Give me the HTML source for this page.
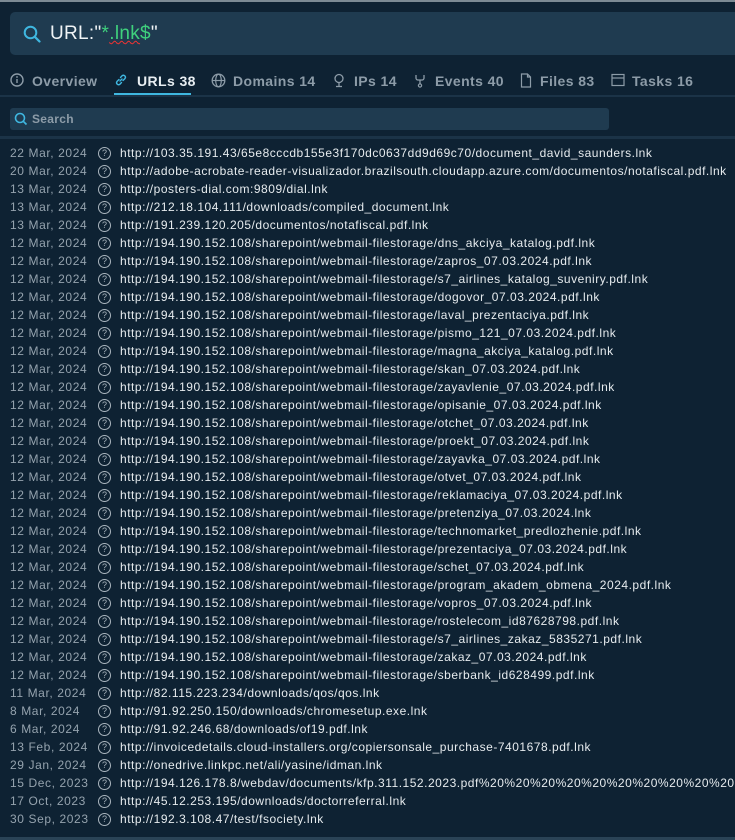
<!DOCTYPE html>
<html><head><meta charset="utf-8"><style>
body{margin:0;width:735px;height:840px;background:#0e2233;font-family:"Liberation Sans",sans-serif;overflow:hidden;position:relative}
.top{position:absolute;left:0;top:0;width:735px;height:2px;background:#7c8a94}
.sb{position:absolute;left:10px;top:12px;width:730px;height:43px;background:#1f3b50;border-radius:5px}
.sb .t{position:absolute;left:40px;top:11px;font-size:19px;color:#f0f4f6;letter-spacing:0.3px}
.g{color:#3fd17d}
.tabs{position:absolute;top:71px;left:0;height:24px;width:735px;font-size:14px;color:#8d9ca8;font-weight:bold}
.tab{position:absolute;top:2px;white-space:nowrap}
.tl{position:absolute;top:2px;white-space:nowrap;letter-spacing:0.4px}
.line{position:absolute;left:0;width:735px;height:2px;background:#1b3347}
.srch{position:absolute;left:10px;top:108px;width:599px;height:22px;background:#1f3b50;border-radius:3px}
.srch span{position:absolute;left:22px;top:4px;font-size:12px;color:#8d9ca8;font-weight:bold;letter-spacing:0.3px}
.row{position:absolute;left:0;height:18px;font-size:12px;white-space:nowrap}
.d{position:absolute;left:10px;top:0;color:#95a3ae;letter-spacing:0.6px}
.q{position:absolute;left:98px;top:1px;width:11px;height:11px;border:1px solid #aab5be;border-radius:50%;font-size:9px;color:#aab5be;text-align:center;line-height:11px}
.u{position:absolute;left:120px;top:0;color:#e6ebee;letter-spacing:0.52px}
.bot{position:absolute;left:0;top:837px;width:735px;height:3px;background:#2a4356}
</style></head><body>
<div class="top"></div>
<div class="sb">
<svg style="position:absolute;left:13px;top:13px" width="18" height="18" viewBox="0 0 18 18"><circle cx="7.5" cy="7.5" r="5.8" fill="none" stroke="#3fb7e0" stroke-width="2"/><line x1="11.8" y1="11.8" x2="16.5" y2="16.5" stroke="#3fb7e0" stroke-width="2.2" stroke-linecap="round"/></svg>
<div class="t">URL:"<span class="g">*<span style="text-decoration:underline wavy #e33;text-decoration-thickness:1px">.lnk</span>$</span>"</div>
</div>
<div class="tabs">
<svg class="tab" style="left:10px" width="14" height="14"><circle cx="7" cy="7" r="6" fill="none" stroke="#8d9ca8" stroke-width="1.4"/><line x1="7" y1="6" x2="7" y2="10" stroke="#8d9ca8" stroke-width="1.4"/><circle cx="7" cy="4" r="0.9" fill="#8d9ca8"/></svg><span class="tl" style="left:32px">Overview</span>
<svg class="tab" style="left:114px" width="14" height="14"><path d="M6 8 L8 6 M5 6.5 L3 8.5 a2 2 0 0 0 2.8 2.8 L7.5 9.5 M9 7.5 L11 5.5 a2 2 0 0 0 -2.8 -2.8 L6.5 4.5" fill="none" stroke="#3fb7e0" stroke-width="1.4" stroke-linecap="round"/></svg><span class="tl" style="left:137px;color:#e8eef2">URLs 38</span>
<svg class="tab" style="left:211px" width="15" height="15"><circle cx="7.5" cy="7.5" r="6.3" fill="none" stroke="#8d9ca8" stroke-width="1.3"/><ellipse cx="7.5" cy="7.5" rx="2.8" ry="6.3" fill="none" stroke="#8d9ca8" stroke-width="1.2"/><line x1="1.2" y1="7.5" x2="13.8" y2="7.5" stroke="#8d9ca8" stroke-width="1.2"/></svg><span class="tl" style="left:233px">Domains 14</span>
<svg class="tab" style="left:333px" width="12" height="15"><circle cx="6" cy="5.5" r="4" fill="none" stroke="#8d9ca8" stroke-width="1.3"/><line x1="6" y1="9.5" x2="6" y2="14" stroke="#8d9ca8" stroke-width="1.3"/><line x1="3" y1="13.5" x2="9" y2="13.5" stroke="#8d9ca8" stroke-width="1.3"/></svg><span class="tl" style="left:354px">IPs 14</span>
<svg class="tab" style="left:414px" width="12" height="15"><path d="M2 2 V5 a2 2 0 0 0 2 2 H8 a2 2 0 0 0 2 -2 V2 M6 7 V11" fill="none" stroke="#8d9ca8" stroke-width="1.3"/><circle cx="6" cy="12.5" r="1.6" fill="none" stroke="#8d9ca8" stroke-width="1.2"/></svg><span class="tl" style="left:435px">Events 40</span>
<svg class="tab" style="left:520px" width="12" height="15"><path d="M1.5 1 H7.5 L10.5 4 V14 H1.5 Z M7.5 1 V4 H10.5" fill="none" stroke="#8d9ca8" stroke-width="1.2"/></svg><span class="tl" style="left:540px">Files 83</span>
<svg class="tab" style="left:611px" width="14" height="14"><rect x="1" y="1.5" width="12" height="11" fill="none" stroke="#8d9ca8" stroke-width="1.2"/><line x1="1" y1="5" x2="13" y2="5" stroke="#8d9ca8" stroke-width="1.2"/></svg><span class="tl" style="left:632px">Tasks 16</span>
</div>
<div style="position:absolute;left:114px;top:93px;width:77px;height:2px;background:#3fb7e0"></div>
<div class="line" style="top:95px"></div>
<div class="srch"><svg style="position:absolute;left:4px;top:4px" width="14" height="14"><circle cx="6" cy="6" r="4.5" fill="none" stroke="#3fb7e0" stroke-width="1.6"/><line x1="9.3" y1="9.3" x2="12.5" y2="12.5" stroke="#3fb7e0" stroke-width="1.7"/></svg><span>Search</span></div>
<div class="line" style="top:136px;height:3px"></div>
<div class="row" style="top:146px"><span class="d">22 Mar, 2024</span><span class="q">?</span><span class="u">http://103.35.191.43/65e8cccdb155e3f170dc0637dd9d69c70/document_david_saunders.lnk</span></div>
<div class="row" style="top:164px"><span class="d">20 Mar, 2024</span><span class="q">?</span><span class="u">http://adobe-acrobate-reader-visualizador.brazilsouth.cloudapp.azure.com/documentos/notafiscal.pdf.lnk</span></div>
<div class="row" style="top:182px"><span class="d">13 Mar, 2024</span><span class="q">?</span><span class="u">http://posters-dial.com:9809/dial.lnk</span></div>
<div class="row" style="top:200px"><span class="d">13 Mar, 2024</span><span class="q">?</span><span class="u">http://212.18.104.111/downloads/compiled_document.lnk</span></div>
<div class="row" style="top:218px"><span class="d">13 Mar, 2024</span><span class="q">?</span><span class="u">http://191.239.120.205/documentos/notafiscal.pdf.lnk</span></div>
<div class="row" style="top:236px"><span class="d">12 Mar, 2024</span><span class="q">?</span><span class="u">http://194.190.152.108/sharepoint/webmail-filestorage/dns_akciya_katalog.pdf.lnk</span></div>
<div class="row" style="top:254px"><span class="d">12 Mar, 2024</span><span class="q">?</span><span class="u">http://194.190.152.108/sharepoint/webmail-filestorage/zapros_07.03.2024.pdf.lnk</span></div>
<div class="row" style="top:272px"><span class="d">12 Mar, 2024</span><span class="q">?</span><span class="u">http://194.190.152.108/sharepoint/webmail-filestorage/s7_airlines_katalog_suveniry.pdf.lnk</span></div>
<div class="row" style="top:290px"><span class="d">12 Mar, 2024</span><span class="q">?</span><span class="u">http://194.190.152.108/sharepoint/webmail-filestorage/dogovor_07.03.2024.pdf.lnk</span></div>
<div class="row" style="top:308px"><span class="d">12 Mar, 2024</span><span class="q">?</span><span class="u">http://194.190.152.108/sharepoint/webmail-filestorage/laval_prezentaciya.pdf.lnk</span></div>
<div class="row" style="top:326px"><span class="d">12 Mar, 2024</span><span class="q">?</span><span class="u">http://194.190.152.108/sharepoint/webmail-filestorage/pismo_121_07.03.2024.pdf.lnk</span></div>
<div class="row" style="top:344px"><span class="d">12 Mar, 2024</span><span class="q">?</span><span class="u">http://194.190.152.108/sharepoint/webmail-filestorage/magna_akciya_katalog.pdf.lnk</span></div>
<div class="row" style="top:362px"><span class="d">12 Mar, 2024</span><span class="q">?</span><span class="u">http://194.190.152.108/sharepoint/webmail-filestorage/skan_07.03.2024.pdf.lnk</span></div>
<div class="row" style="top:380px"><span class="d">12 Mar, 2024</span><span class="q">?</span><span class="u">http://194.190.152.108/sharepoint/webmail-filestorage/zayavlenie_07.03.2024.pdf.lnk</span></div>
<div class="row" style="top:398px"><span class="d">12 Mar, 2024</span><span class="q">?</span><span class="u">http://194.190.152.108/sharepoint/webmail-filestorage/opisanie_07.03.2024.pdf.lnk</span></div>
<div class="row" style="top:416px"><span class="d">12 Mar, 2024</span><span class="q">?</span><span class="u">http://194.190.152.108/sharepoint/webmail-filestorage/otchet_07.03.2024.pdf.lnk</span></div>
<div class="row" style="top:434px"><span class="d">12 Mar, 2024</span><span class="q">?</span><span class="u">http://194.190.152.108/sharepoint/webmail-filestorage/proekt_07.03.2024.pdf.lnk</span></div>
<div class="row" style="top:452px"><span class="d">12 Mar, 2024</span><span class="q">?</span><span class="u">http://194.190.152.108/sharepoint/webmail-filestorage/zayavka_07.03.2024.pdf.lnk</span></div>
<div class="row" style="top:470px"><span class="d">12 Mar, 2024</span><span class="q">?</span><span class="u">http://194.190.152.108/sharepoint/webmail-filestorage/otvet_07.03.2024.pdf.lnk</span></div>
<div class="row" style="top:488px"><span class="d">12 Mar, 2024</span><span class="q">?</span><span class="u">http://194.190.152.108/sharepoint/webmail-filestorage/reklamaciya_07.03.2024.pdf.lnk</span></div>
<div class="row" style="top:506px"><span class="d">12 Mar, 2024</span><span class="q">?</span><span class="u">http://194.190.152.108/sharepoint/webmail-filestorage/pretenziya_07.03.2024.lnk</span></div>
<div class="row" style="top:524px"><span class="d">12 Mar, 2024</span><span class="q">?</span><span class="u">http://194.190.152.108/sharepoint/webmail-filestorage/technomarket_predlozhenie.pdf.lnk</span></div>
<div class="row" style="top:542px"><span class="d">12 Mar, 2024</span><span class="q">?</span><span class="u">http://194.190.152.108/sharepoint/webmail-filestorage/prezentaciya_07.03.2024.pdf.lnk</span></div>
<div class="row" style="top:560px"><span class="d">12 Mar, 2024</span><span class="q">?</span><span class="u">http://194.190.152.108/sharepoint/webmail-filestorage/schet_07.03.2024.pdf.lnk</span></div>
<div class="row" style="top:578px"><span class="d">12 Mar, 2024</span><span class="q">?</span><span class="u">http://194.190.152.108/sharepoint/webmail-filestorage/program_akadem_obmena_2024.pdf.lnk</span></div>
<div class="row" style="top:596px"><span class="d">12 Mar, 2024</span><span class="q">?</span><span class="u">http://194.190.152.108/sharepoint/webmail-filestorage/vopros_07.03.2024.pdf.lnk</span></div>
<div class="row" style="top:614px"><span class="d">12 Mar, 2024</span><span class="q">?</span><span class="u">http://194.190.152.108/sharepoint/webmail-filestorage/rostelecom_id87628798.pdf.lnk</span></div>
<div class="row" style="top:632px"><span class="d">12 Mar, 2024</span><span class="q">?</span><span class="u">http://194.190.152.108/sharepoint/webmail-filestorage/s7_airlines_zakaz_5835271.pdf.lnk</span></div>
<div class="row" style="top:650px"><span class="d">12 Mar, 2024</span><span class="q">?</span><span class="u">http://194.190.152.108/sharepoint/webmail-filestorage/zakaz_07.03.2024.pdf.lnk</span></div>
<div class="row" style="top:668px"><span class="d">12 Mar, 2024</span><span class="q">?</span><span class="u">http://194.190.152.108/sharepoint/webmail-filestorage/sberbank_id628499.pdf.lnk</span></div>
<div class="row" style="top:686px"><span class="d">11 Mar, 2024</span><span class="q">?</span><span class="u">http://82.115.223.234/downloads/qos/qos.lnk</span></div>
<div class="row" style="top:704px"><span class="d">8 Mar, 2024</span><span class="q">?</span><span class="u">http://91.92.250.150/downloads/chromesetup.exe.lnk</span></div>
<div class="row" style="top:722px"><span class="d">6 Mar, 2024</span><span class="q">?</span><span class="u">http://91.92.246.68/downloads/of19.pdf.lnk</span></div>
<div class="row" style="top:740px"><span class="d">13 Feb, 2024</span><span class="q">?</span><span class="u">http://invoicedetails.cloud-installers.org/copiersonsale_purchase-7401678.pdf.lnk</span></div>
<div class="row" style="top:758px"><span class="d">29 Jan, 2024</span><span class="q">?</span><span class="u">http://onedrive.linkpc.net/ali/yasine/idman.lnk</span></div>
<div class="row" style="top:776px"><span class="d">15 Dec, 2023</span><span class="q">?</span><span class="u">http://194.126.178.8/webdav/documents/kfp.311.152.2023.pdf%20%20%20%20%20%20%20%20%20%20.lnk</span></div>
<div class="row" style="top:794px"><span class="d">17 Oct, 2023</span><span class="q">?</span><span class="u">http://45.12.253.195/downloads/doctorreferral.lnk</span></div>
<div class="row" style="top:812px"><span class="d">30 Sep, 2023</span><span class="q">?</span><span class="u">http://192.3.108.47/test/fsociety.lnk</span></div>
<div class="bot"></div>
</body></html>
